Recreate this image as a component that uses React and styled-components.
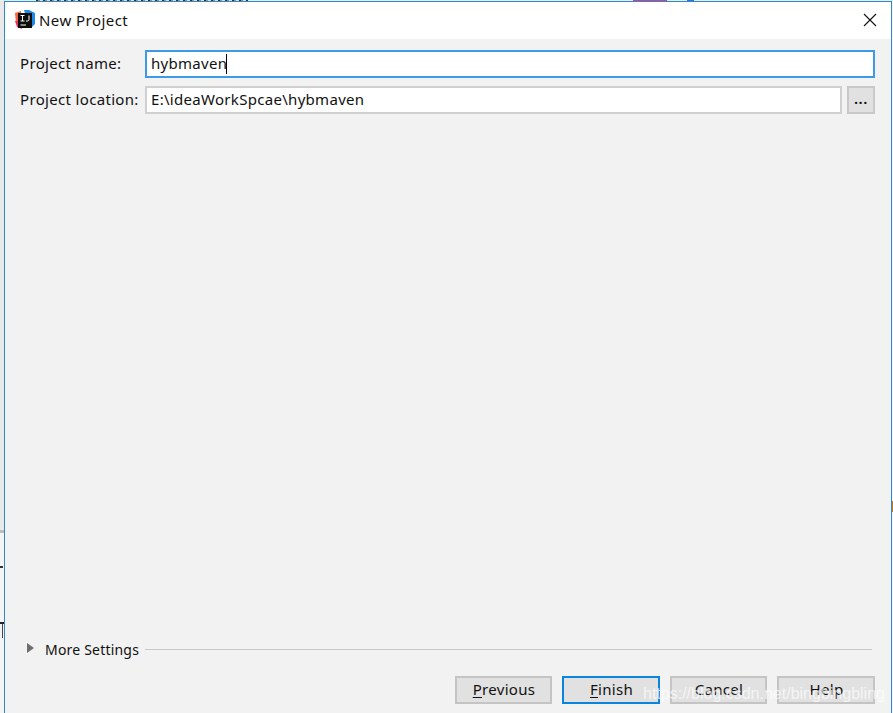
import React from 'react';
import styled, { createGlobalStyle } from 'styled-components';

const Global = createGlobalStyle`
  html, body {
    margin: 0;
    padding: 0;
    background: #fff;
    font-family: "Noto Sans", "Liberation Sans", sans-serif;
  }
`;

const Desktop = styled.div`
  position: relative;
  width: 893px;
  height: 713px;
  overflow: hidden;
  background: #f4f4f4;
  box-sizing: border-box;
  padding: 1px 1px 0 4px;
`;

// slivers of the windows behind the dialog
const Sliver = styled.div`
  position: absolute;
  left: ${(p) => p.$x}px;
  top: ${(p) => p.$y}px;
  width: ${(p) => p.$w}px;
  height: ${(p) => p.$h}px;
  background: ${(p) => p.$c};
`;

const BackText = styled.div`
  position: absolute;
  left: 36px;
  top: 0;
  width: 212px;
  height: 1px;
  background: repeating-linear-gradient(90deg, #333 0 2px, #b98a4a 2px 4px, #ddd 4px 7px);
`;

const Dialog = styled.div`
  position: relative;
  height: 712px;
  box-sizing: border-box;
  border: 1px solid #2b8ad8;
  border-bottom: 0;
  background: #f2f2f2;
  display: flex;
  flex-direction: column;
  color: #111;
  font-size: 15px;
  letter-spacing: 0.3px;
`;

const TitleBar = styled.div`
  height: 37px;
  flex: none;
  background: #fff;
  display: flex;
  align-items: center;
  padding: 0 14px 2px 10px;
  box-sizing: border-box;
  gap: 4px;
`;

const TitleText = styled.span`
  flex: 1;
  font-size: 15px;
  letter-spacing: 0.45px;
`;

const CloseButton = styled.div`
  width: 14px;
  height: 14px;
  display: flex;
`;

const Content = styled.div`
  flex: 1;
  display: flex;
  flex-direction: column;
  padding: 11px 16px 9px 15px;
  background: #f2f2f2;
`;

const Row = styled.div`
  display: flex;
  align-items: center;
  gap: 5px;
  margin-bottom: ${(p) => p.$mb || 0}px;
`;

const Label = styled.label`
  width: 120px;
  flex: none;
  white-space: nowrap;
  padding-bottom: 2px;
  letter-spacing: 0.33px;
`;

const Field = styled.div`
  flex: 1;
  box-sizing: border-box;
  height: 28px;
  display: flex;
  align-items: center;
  padding: 0 0 2px 4px;
  background: #fff;
  border: ${(p) => (p.$focused ? '2px solid #3c9ae8' : '2px solid #d0d0d0')};
  white-space: nowrap;
`;

const Caret = styled.span`
  display: inline-block;
  width: 1px;
  height: 20px;
  background: #000;
  margin: 2px 0 0 -1px;
`;

const BrowseButton = styled.div`
  width: 28px;
  height: 28px;
  box-sizing: border-box;
  background: #e1e1e1;
  border: 2px solid #c8c8c8;
  display: flex;
  align-items: center;
  justify-content: center;
  padding-bottom: 4px;
  flex: none;
  font-size: 15px;
  font-weight: 600;
  letter-spacing: 0.6px;
`;

const Spacer = styled.div`
  flex: 1;
`;

const SettingsRow = styled.div`
  display: flex;
  align-items: center;
  margin-left: 7px;
  margin-bottom: 17px;
  height: 20px;
`;

const Arrow = styled.div`
  width: 0;
  height: 0;
  border-left: 7px solid #6e6e6e;
  border-top: 5.5px solid transparent;
  border-bottom: 5.5px solid transparent;
  margin-right: 11px;
  margin-top: -2px;
`;

const SettingsText = styled.span`
  font-size: 14px;
  letter-spacing: 0.2px;
`;

const Divider = styled.div`
  flex: 1;
  height: 1px;
  background: #c8c8c8;
  margin: 1px 3px 0 6px;
`;

const Footer = styled.div`
  display: flex;
  justify-content: flex-end;
  gap: 10px;
`;

const Button = styled.div`
  width: ${(p) => p.$w}px;
  height: 28px;
  box-sizing: border-box;
  background: #e1e1e1;
  border: 2px solid ${(p) => (p.$primary ? '#0a84dc' : '#c4c4c4')};
  display: flex;
  align-items: center;
  justify-content: center;
  padding: 0 0 2px 1px;
  u {
    text-underline-offset: 2px;
  }
`;

const Watermark = styled.div`
  position: absolute;
  left: 643px;
  top: 684px;
  font-family: "Liberation Sans", sans-serif;
  font-size: 16px;
  line-height: 20px;
  letter-spacing: 0;
  color: rgba(255, 255, 255, 0.7);
  white-space: nowrap;
  pointer-events: none;
`;

const IdeaLogo = () => (
  <svg width="20" height="20" viewBox="0 0 20 20">
    <path d="M0 3 L6 1 L6 13 L1 13 Z" fill="#f4683c" />
    <path d="M0 11 L6 11 L7 19 L2 17 Z" fill="#e8326e" />
    <path d="M9 0 L14 0 L20 3 L20 14 L16 18 L12 10 Z" fill="#1d8ae8" />
    <path d="M3 3 H17 V18 H3 Z" fill="#0c0c0c" />
    <path d="M5.5 5.5 H9.5 M7.5 5.5 V11 M5.5 11 H9.5" stroke="#fff" strokeWidth="1" fill="none" />
    <path d="M14 5.5 V9.5 Q14 11 12.5 11 H11" stroke="#fff" strokeWidth="1" fill="none" />
    <path d="M5.5 15 H11" stroke="#fff" strokeWidth="1" />
  </svg>
);

const CloseIcon = () => (
  <svg width="14" height="14" viewBox="0 0 14 14">
    <path d="M1 1 L13 13 M13 1 L1 13" stroke="#111" strokeWidth="1.1" />
  </svg>
);

const App = () => (
  <>
    <Global />
    <Desktop>
      <Sliver $x={0} $y={0} $w={893} $h={1} $c="#ececec" />
      <Sliver $x={0} $y={1} $w={4} $h={531} $c="#e9e9e9" />
      <Sliver $x={0} $y={530} $w={4} $h={3} $c="#bdbdbd" />
      <Sliver $x={0} $y={566} $w={3} $h={2} $c="#333" />
      <Sliver $x={0} $y={622} $w={4} $h={2} $c="#223" />
      <Sliver $x={2} $y={624} $w={1} $h={14} $c="#445" />
      <Sliver $x={633} $y={0} $w={34} $h={1} $c="#d8407c" />
      <Sliver $x={687} $y={0} $w={7} $h={1} $c="#3a6fd0" />
      <Sliver $x={892} $y={501} $w={1} $h={11} $c="#c97a1a" />
      <BackText />
      <Dialog>
        <TitleBar>
          <IdeaLogo />
          <TitleText>New Project</TitleText>
          <CloseButton>
            <CloseIcon />
          </CloseButton>
        </TitleBar>
        <Content>
          <Row $mb={8}>
            <Label>Project name:</Label>
            <Field $focused>
              hybmaven
              <Caret />
            </Field>
          </Row>
          <Row>
            <Label>Project location:</Label>
            <Field>E:\ideaWorkSpcae\hybmaven</Field>
            <BrowseButton>...</BrowseButton>
          </Row>
          <Spacer />
          <SettingsRow>
            <Arrow />
            <SettingsText>More Settings</SettingsText>
            <Divider />
          </SettingsRow>
          <Footer>
            <Button $w={97}>
              <span>
                <u>P</u>revious
              </span>
            </Button>
            <Button $w={98} $primary>
              <span>
                <u>F</u>inish
              </span>
            </Button>
            <Button $w={97}>Cancel</Button>
            <Button $w={98}>Help</Button>
          </Footer>
        </Content>
      </Dialog>
      <Watermark>https://blog.csdn.net/bingbingbling</Watermark>
    </Desktop>
  </>
);

export default App;
